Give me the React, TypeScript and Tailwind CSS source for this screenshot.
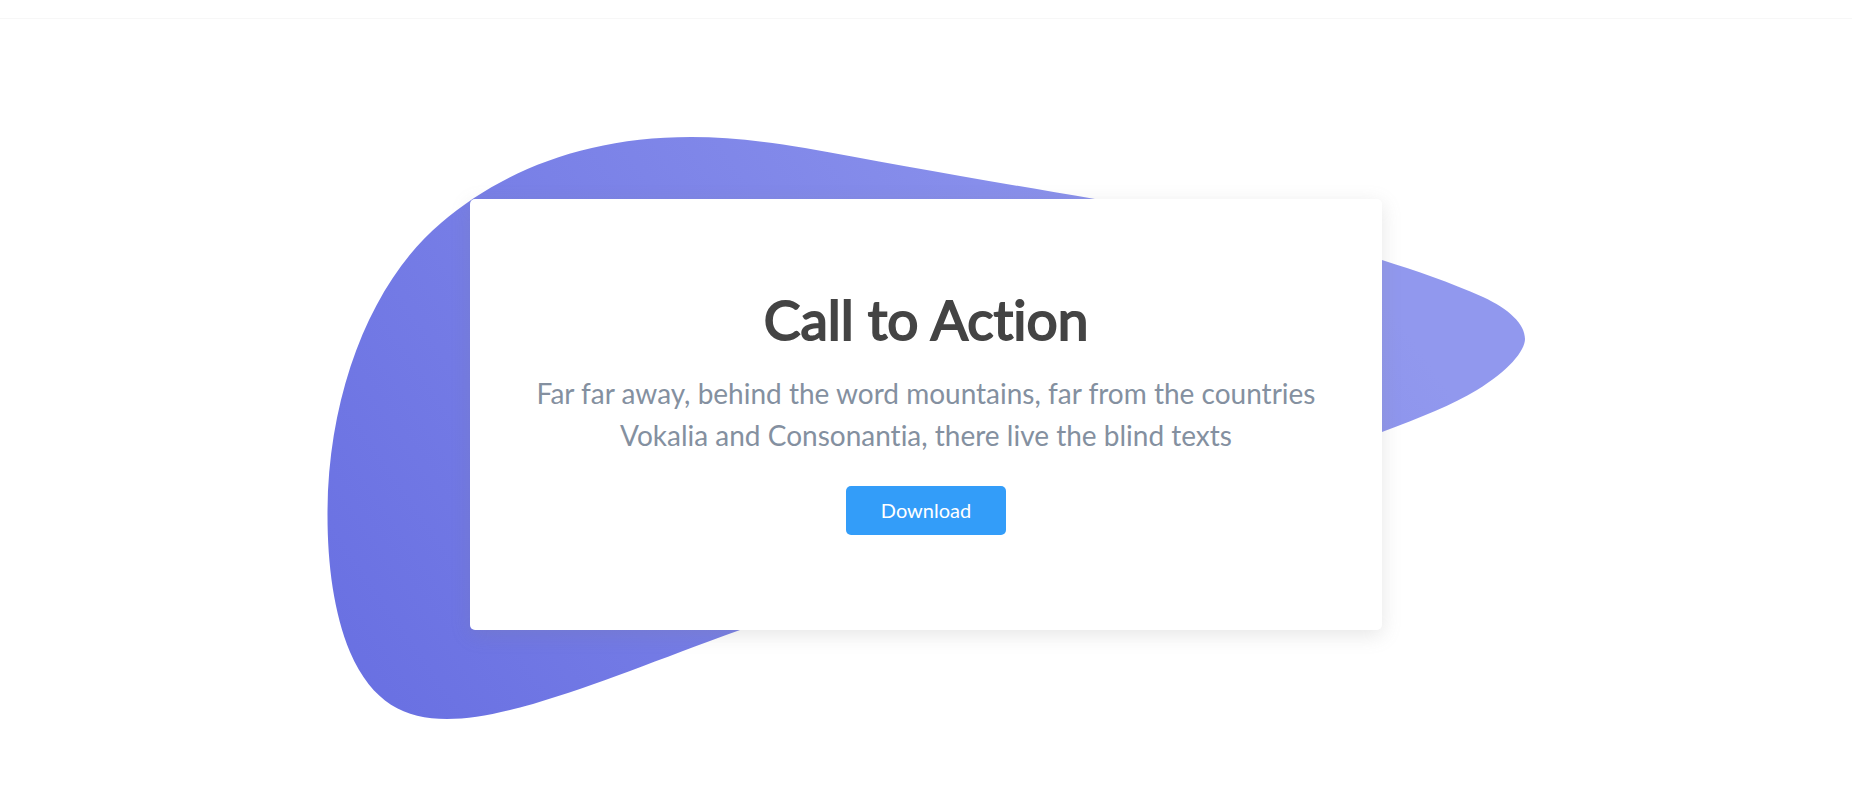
function Blob() {
  return (
    <svg
      viewBox="0 0 1198 582"
      className="col-start-1 row-start-1 w-[1198px] max-w-full self-start"
      aria-hidden="true"
    >
      <defs>
        <linearGradient id="blob-fill" gradientUnits="userSpaceOnUse" x1="30" y1="560" x2="1007" y2="-120">
          <stop offset="0" stopColor="#6970e2" />
          <stop offset="0.9" stopColor="#9198ee" />
          <stop offset="1" stopColor="#9198ee" />
        </linearGradient>
      </defs>
      <path
        d="M0.5 378 C0.5 254 46 143 114 86 C175 34 258 0 364 0 C400 0 436 4 478 11 C560 26 660 44 768 62 C890 83 985 100 1055 123 C1090 134 1122 145 1156 160 C1182 172 1198 187 1198 202 C1198 214 1181 234 1150 253 C1125 268 1095 280 1055 295 C800 380 560 438 413 493 C330 523 270 548 206 567 C170 577 145 582 120 582 C78 582 45 566 23 515 C7 476 0.5 428 0.5 378 Z"
        fill="url(#blob-fill)"
      />
    </svg>
  );
}

export default function App() {
  return (
    <div className="min-h-screen bg-white font-['Lato',sans-serif] [font-variant-ligatures:no-common-ligatures]">
      <div className="h-[19px] border-b border-[#f7f7f7]" />
      <main className="grid grid-cols-1 justify-items-center px-4 pt-[118px] pb-[74px]">
        <Blob />
        <section className="col-start-1 row-start-1 mt-[62px] w-full max-w-[912px] self-start rounded-[5px] bg-white px-[60px] pt-[87px] pb-[95px] text-center shadow-[0_5px_20px_rgba(128,128,128,0.2)]">
          <h1 className="text-[55px] leading-[67px] font-normal text-[#444444] [-webkit-text-stroke:2px_#444444]">
            Call to Action
          </h1>
          <p className="mt-[19px] text-[28px] leading-[42px] text-[#8490a0]">
            Far far away, behind the word mountains, far from the countries Vokalia and Consonantia,
            there live the blind texts
          </p>
          <button
            type="button"
            className="mt-[30px] h-[49px] rounded-[5px] bg-[#339df9] px-[35px] pb-0.5 text-[20px] leading-[30px] text-white"
          >
            Download
          </button>
        </section>
      </main>
    </div>
  );
}
